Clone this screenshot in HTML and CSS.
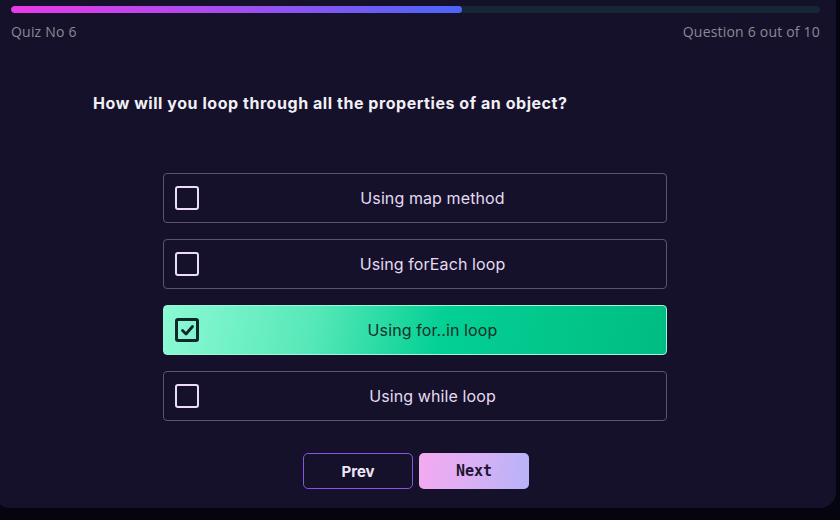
FILE: index.html
```html
<!DOCTYPE html>
<html>
<head>
<meta charset="utf-8">
<link rel="stylesheet" href="styles.css">
</head>
<body>
<div class="card">
  <div class="progress"><div class="progress-fill" style="width:55.8%"></div></div>
  <div class="meta">
    <span>Quiz No 6</span>
    <span>Question 6 out of 10</span>
  </div>
  <h1 class="question">How will you loop through all the properties of an object?</h1>
  <div class="options">
    <div class="option"><span class="box"></span><span class="label">Using map method</span></div>
    <div class="option"><span class="box"></span><span class="label">Using forEach loop</span></div>
    <div class="option selected"><span class="box"><svg width="15" height="15" viewBox="0 0 15 15"><path d="M2.5 7.5 L6 11 L12.5 3.5" fill="none" stroke="#10262a" stroke-width="2.8" stroke-linecap="round" stroke-linejoin="round"/></svg></span><span class="label">Using for..in loop</span></div>
    <div class="option"><span class="box"></span><span class="label">Using while loop</span></div>
  </div>
  <div class="nav">
    <button class="btn prev">Prev</button>
    <button class="btn next">Next</button>
  </div>
</div>
</body>
</html>
```
FILE: styles.css
```css
html, body {
  margin: 0;
  padding: 0;
  background: #05050f;
  width: 840px;
  height: 520px;
  overflow: hidden;
}
.card {
  margin-left: -6px;
  width: 842px;
  height: 508px;
  background: #16112a;
  border-radius: 0 0 16px 16px;
  padding: 6px 0 0 17px;
  box-sizing: border-box;
  display: flex;
  flex-direction: column;
  font-family: Inter, "Noto Sans", sans-serif;
}
.progress {
  width: 809px;
  height: 7px;
  border-radius: 4px;
  background: #172636;
  overflow: hidden;
}
.progress-fill {
  height: 100%;
  border-radius: 4px;
  background: linear-gradient(90deg, #e93ae6 0%, #a24ef0 50%, #4a66f8 100%);
}
.meta {
  width: 809px;
  display: flex;
  justify-content: space-between;
  margin-top: 10px;
  font-family: "Open Sans", Inter, sans-serif;
  font-size: 14px;
  letter-spacing: 0.2px;
  color: #8c8799;
  line-height: 18px;
}
.question {
  margin: 52px 0 0 82px;
  font-size: 16px;
  font-weight: 700;
  color: #f1eff6;
  line-height: 20px;
  letter-spacing: 0.55px;
}
.options {
  margin: 60px 0 0 152px;
  width: 504px;
  display: flex;
  flex-direction: column;
  gap: 16px;
}
.option {
  height: 50px;
  box-sizing: border-box;
  border: 1px solid #5a5470;
  border-radius: 4px;
  display: flex;
  align-items: center;
  padding-left: 11px;
  position: relative;
}
.box {
  width: 24px;
  height: 24px;
  box-sizing: border-box;
  border: 2.5px solid #ecdcfc;
  border-radius: 3px;
  display: flex;
  align-items: center;
  justify-content: center;
}
.label {
  flex: 1;
  text-align: center;
  font-size: 16px;
  color: #e4dbf3;
  letter-spacing: 0.1px;
}
.option.selected {
  border: 1px solid #9cf5d8;
  background: linear-gradient(100deg, #8cf9d4 0%, #56e8b8 30%, #04d094 55%, #00bd82 100%);
}
.option.selected .box {
  border-color: #10262a;
  border-width: 3px;
}
.option.selected .label {
  color: #12302c;
}
.nav {
  margin: 32px 0 0 292px;
  display: flex;
  gap: 6px;
}
.btn {
  width: 110px;
  height: 36px;
  box-sizing: border-box;
  border-radius: 5px;
  font-size: 15px;
  font-weight: 700;
  cursor: pointer;
}
.prev {
  background: #16112a;
  border: 1px solid #8b52e6;
  color: #ece6f7;
  font-family: Inter, sans-serif;
}
.next {
  border: none;
  background: linear-gradient(100deg, #f5a9ef 0%, #d9b0f4 50%, #b6b3f8 100%);
  color: #1b1530;
  font-family: "DejaVu Sans Mono", monospace;
  font-size: 15px;
}
```
